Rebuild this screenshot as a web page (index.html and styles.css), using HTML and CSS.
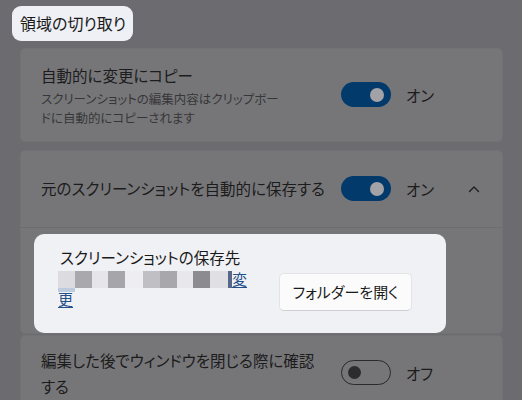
FILE: index.html
```html
<!DOCTYPE html>
<html lang="ja">
<head>
<meta charset="utf-8">
<title>領域の切り取り</title>
<link rel="stylesheet" href="styles.css">
</head>
<body>
<div class="page">
  <div class="section-title">領域の切り取り</div>

  <div class="card">
    <div class="row row-copy">
      <div class="text">
        <div class="label">自動的に変更にコピー</div>
        <div class="desc">スクリーンショットの編集内容はクリップボードに自動的にコピーされます</div>
      </div>
      <div class="control">
        <span class="toggle toggle-on"><span class="knob"></span></span>
        <span class="state">オン</span>
      </div>
      <div class="trail"></div>
    </div>
  </div>

  <div class="card card-expander">
    <div class="row row-header">
      <div class="text">
        <div class="label">元のスクリーンショットを自動的に保存する</div>
      </div>
      <div class="control">
        <span class="toggle toggle-on"><span class="knob"></span></span>
        <span class="state">オン</span>
      </div>
      <div class="trail">
        <svg class="chevron" width="12" height="8" viewBox="0 0 12 8"><path d="M1.5 6.5 L6 2 L10.5 6.5" fill="none" stroke="#1c1c1c" stroke-width="1.3" stroke-linecap="round" stroke-linejoin="round"/></svg>
      </div>
    </div>
    <div class="expander-body">
      <div class="highlight">
        <div class="path-col">
          <div class="path-label">スクリーンショットの保存先</div>
          <div class="path"><span class="px px-a"></span><span class="px px-b"></span><span class="px px-c"></span><span class="px px-d"></span><span class="px px-e"></span><span class="px px-f"></span><span class="px px-g"></span><span class="px px-h"></span><span class="px px-i"></span><span class="px px-j"></span><span class="px px-k"></span><a class="link" href="#">変更</a></div>
        </div>
        <button class="btn">フォルダーを開く</button>
      </div>
    </div>
  </div>

  <div class="card">
    <div class="row row-close">
      <div class="text">
        <div class="label label-tall">編集した後でウィンドウを閉じる際に確認する</div>
      </div>
      <div class="control">
        <span class="toggle toggle-off"><span class="knob"></span></span>
        <span class="state">オフ</span>
      </div>
      <div class="trail"></div>
    </div>
  </div>
</div>
</body>
</html>
```

FILE: styles.css
```css
* { box-sizing: border-box; }

html, body {
  margin: 0;
  padding: 0;
  background: #6c6c70;
  height: 100%;
  overflow: hidden;
}

body {
  font-family: "Noto Sans CJK JP", "Noto Sans", sans-serif;
  font-feature-settings: "palt";
  color: #1c1c1c;
}

.page {
  display: flex;
  flex-direction: column;
  padding: 6px 19px 0 20px;
}

.section-title {
  align-self: flex-start;
  margin-left: -8px;
  margin-bottom: 7px;
  height: 35px;
  line-height: 35px;
  padding: 0 7px 0 8px;
  font-size: 16px;
  background: #eef0f5;
  border-radius: 9px;
  color: #1a1a1a;
}

.card {
  background: #767679;
  border: 1px solid #727275;
  border-radius: 5px;
  margin-bottom: 8px;
}

.card-expander { margin-bottom: 1px; }

.row {
  display: flex;
  align-items: center;
  padding-left: 20px;
}

.row-copy { padding-top: 14px; padding-bottom: 14px; }
.row-header { min-height: 77px; border-bottom: 1px solid #6d6d70; }
.row-close { padding-top: 11px; padding-bottom: 11px; }

.text {
  flex: 1;
  min-width: 0;
  padding-right: 14px;
}

.label {
  font-size: 15.5px;
  line-height: 25.6px;
}

.label-tall { line-height: 26px; }

.desc {
  max-width: 245px;
  font-size: 12.5px;
  line-height: 19px;
  color: #363638;
}

.control {
  width: 105px;
  display: flex;
  align-items: center;
  gap: 15px;
}

.state {
  font-size: 15.5px;
  line-height: 22px;
}

.trail {
  width: 56px;
  display: flex;
  justify-content: center;
  align-items: center;
}

.toggle {
  width: 50px;
  height: 25px;
  border-radius: 13px;
  display: flex;
  align-items: center;
  flex-shrink: 0;
}

.toggle-on {
  background: #033a6c;
  justify-content: flex-end;
  padding-right: 7px;
}

.toggle-on .knob {
  width: 14px;
  height: 14px;
  border-radius: 50%;
  background: #a3a3a7;
}

.toggle-off {
  border: 1.3px solid #2a2a2c;
  justify-content: flex-start;
  padding-left: 6px;
}

.toggle-off .knob {
  width: 13px;
  height: 13px;
  border-radius: 50%;
  background: #2c2c2e;
}

.expander-body {
  padding: 6px 0 0 13px;
}

.highlight {
  width: 412px;
  height: 99px;
  background: #f0f1f5;
  border-radius: 10px;
  display: flex;
  justify-content: space-between;
  align-items: flex-start;
  padding: 12px 0 0 24px;
}

.path-label {
  padding-left: 2px;
  font-size: 15.5px;
  line-height: 22px;
  color: #1a1a1a;
}

.path {
  position: relative;
  width: 190px;
  margin-top: 1px;
  font-size: 15px;
  line-height: 20px;
}

.path::after {
  content: "";
  position: absolute;
  left: 0;
  top: 19px;
  width: 17px;
  height: 4px;
  background: #bccbdd;
}

.px {
  display: inline-block;
  height: 17px;
  margin-top: 2px;
  vertical-align: top;
}

.px-a { width: 17px; background: #dcdce0; }
.px-b { width: 17px; background: #a9a9ad; }
.px-c { width: 16px; background: #e6e6ea; }
.px-d { width: 17px; background: #a6a6aa; }
.px-e { width: 18px; background: #eeeef2; }
.px-f { width: 17px; background: #c0c0c4; }
.px-g { width: 17px; background: #a8a8ac; }
.px-h { width: 16px; background: #e8e8ec; }
.px-i { width: 17px; background: #8c8c90; }
.px-j { width: 18px; background: #e0e0e4; }
.px-k { width: 4px; background: #56688a; }

.link {
  color: #24508a;
  text-decoration: underline;
  text-underline-offset: 2px;
}

.btn {
  margin: 27px 34px 0 0;
  width: 133px;
  height: 38px;
  padding: 0;
  font-family: inherit;
  font-feature-settings: "palt";
  font-size: 15px;
  color: #1a1a1a;
  background: #fbfbfc;
  border: 1px solid #e4e4e6;
  border-bottom-color: #cfcfd2;
  border-radius: 5px;
}
```
